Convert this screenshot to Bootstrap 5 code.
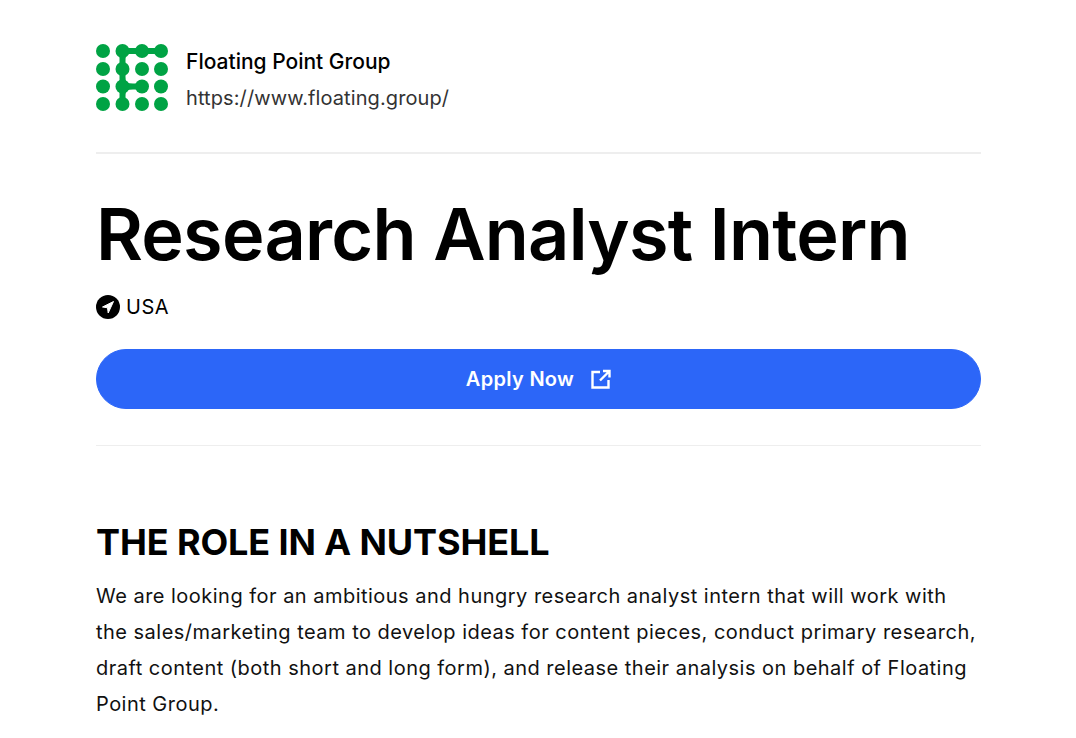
<!DOCTYPE html>
<html lang="en">
<head>
<meta charset="UTF-8">
<meta name="viewport" content="width=device-width, initial-scale=1.0">
<title>Research Analyst Intern - Floating Point Group</title>
<link href="https://cdn.jsdelivr.net/npm/bootstrap@5.3.0/dist/css/bootstrap.min.css" rel="stylesheet">
<style>
body {
    background-color: #fff;
    color: #000;
    font-family: Inter, sans-serif;
    overflow: hidden;
}
.page-wrap {
    padding: 44px 95px 0 96px;
}
.company-logo {
    width: 72px;
    height: 67px;
    margin-right: 18px;
}
.company-name {
    font-size: 21px;
    font-weight: 500;
    line-height: 36px;
}
.company-url {
    font-size: 20px;
    line-height: 36px;
    letter-spacing: 0.1px;
    color: #333;
}
.rule-top {
    height: 2px;
    background-color: #eee;
    margin-top: 36px;
}
.job-title {
    font-size: 72px;
    font-weight: 600;
    line-height: 80px;
    letter-spacing: -0.76px;
    margin: 40px 0 21px;
}
.job-place {
    font-size: 20px;
    line-height: 24px;
    letter-spacing: 0.5px;
    gap: 6px;
}
.apply-btn {
    height: 60px;
    margin-top: 30px;
    background-color: #2c66f8;
    border-color: #2c66f8;
    font-size: 20px;
    font-weight: 600;
    letter-spacing: 0.3px;
    gap: 17px;
}
.rule-bottom {
    height: 1px;
    background-color: #eee;
    margin: 36px 0 74px;
}
.section-title {
    font-size: 36px;
    font-weight: 700;
    line-height: 44px;
    letter-spacing: -0.1px;
    margin-bottom: 14px;
}
.section-text {
    font-size: 20px;
    line-height: 36px;
    letter-spacing: 0.48px;
    color: #111;
    max-width: 881px;
}
</style>
</head>
<body>
<div class="page-wrap">
    <div class="d-flex align-items-start">
        <svg class="company-logo" viewBox="0 0 72 67" fill="#00a344">
            <circle cx="7" cy="7" r="7"/><circle cx="26.5" cy="7" r="7"/><circle cx="46" cy="7" r="7"/><circle cx="65" cy="7" r="7"/>
            <circle cx="7" cy="25" r="7"/><circle cx="26.5" cy="25" r="7"/><circle cx="46" cy="25" r="7"/><circle cx="65" cy="25" r="7"/>
            <circle cx="7" cy="42.500" r="7"/><circle cx="26.5" cy="42.500" r="7"/><circle cx="46" cy="42.500" r="7"/><circle cx="65" cy="42.500" r="7"/>
            <circle cx="7" cy="60" r="7"/><circle cx="26.5" cy="60" r="7"/><circle cx="46" cy="60" r="7"/><circle cx="65" cy="60" r="7"/>
            <path d="M26.500 7H65M26.500 7V60M26.500 42.500H46" fill="none" stroke="#00a344" stroke-width="6"/>
            <path d="M29 9H37Q29 9 29 17zM29 33Q29 40 37 40H29zM29 53Q29 45 37 45H29z"/>
        </svg>
        <div>
            <div class="company-name">Floating Point Group</div>
            <div class="company-url">https://www.floating.group/</div>
        </div>
    </div>
    <div class="rule-top"></div>

    <h1 class="job-title">Research Analyst Intern</h1>
    <div class="job-place d-flex align-items-center">
        <svg width="24" height="24" viewBox="0 0 24 24">
            <circle cx="12" cy="12" r="12" fill="#000"/>
            <path d="M17.500 6.500 6.500 12l5 .8.7 5.200z" fill="#fff" stroke="#fff" stroke-linejoin="round"/>
        </svg>
        <span>USA</span>
    </div>

    <a href="#" class="apply-btn btn btn-primary rounded-pill d-flex align-items-center justify-content-center">
        <span>Apply Now</span>
        <svg width="20" height="20" viewBox="0 0 20 20" fill="none" stroke="#fff" stroke-width="2.400">
            <path d="M9 3H1.500v15.500h16v-7.500"/>
            <path d="M12 2H18.500v6.500M18 2.500 9 11.500"/>
        </svg>
    </a>
    <div class="rule-bottom"></div>

    <h2 class="section-title">THE ROLE IN A NUTSHELL</h2>
    <p class="section-text">We are looking for an ambitious and hungry research analyst intern that will work with the sales/marketing team to develop ideas for content pieces, conduct primary research, draft content (both short and long form), and release their analysis on behalf of Floating Point Group.</p>
</div>
<script src="https://cdn.jsdelivr.net/npm/bootstrap@5.3.0/dist/js/bootstrap.bundle.min.js"></script>
</body>
</html>
